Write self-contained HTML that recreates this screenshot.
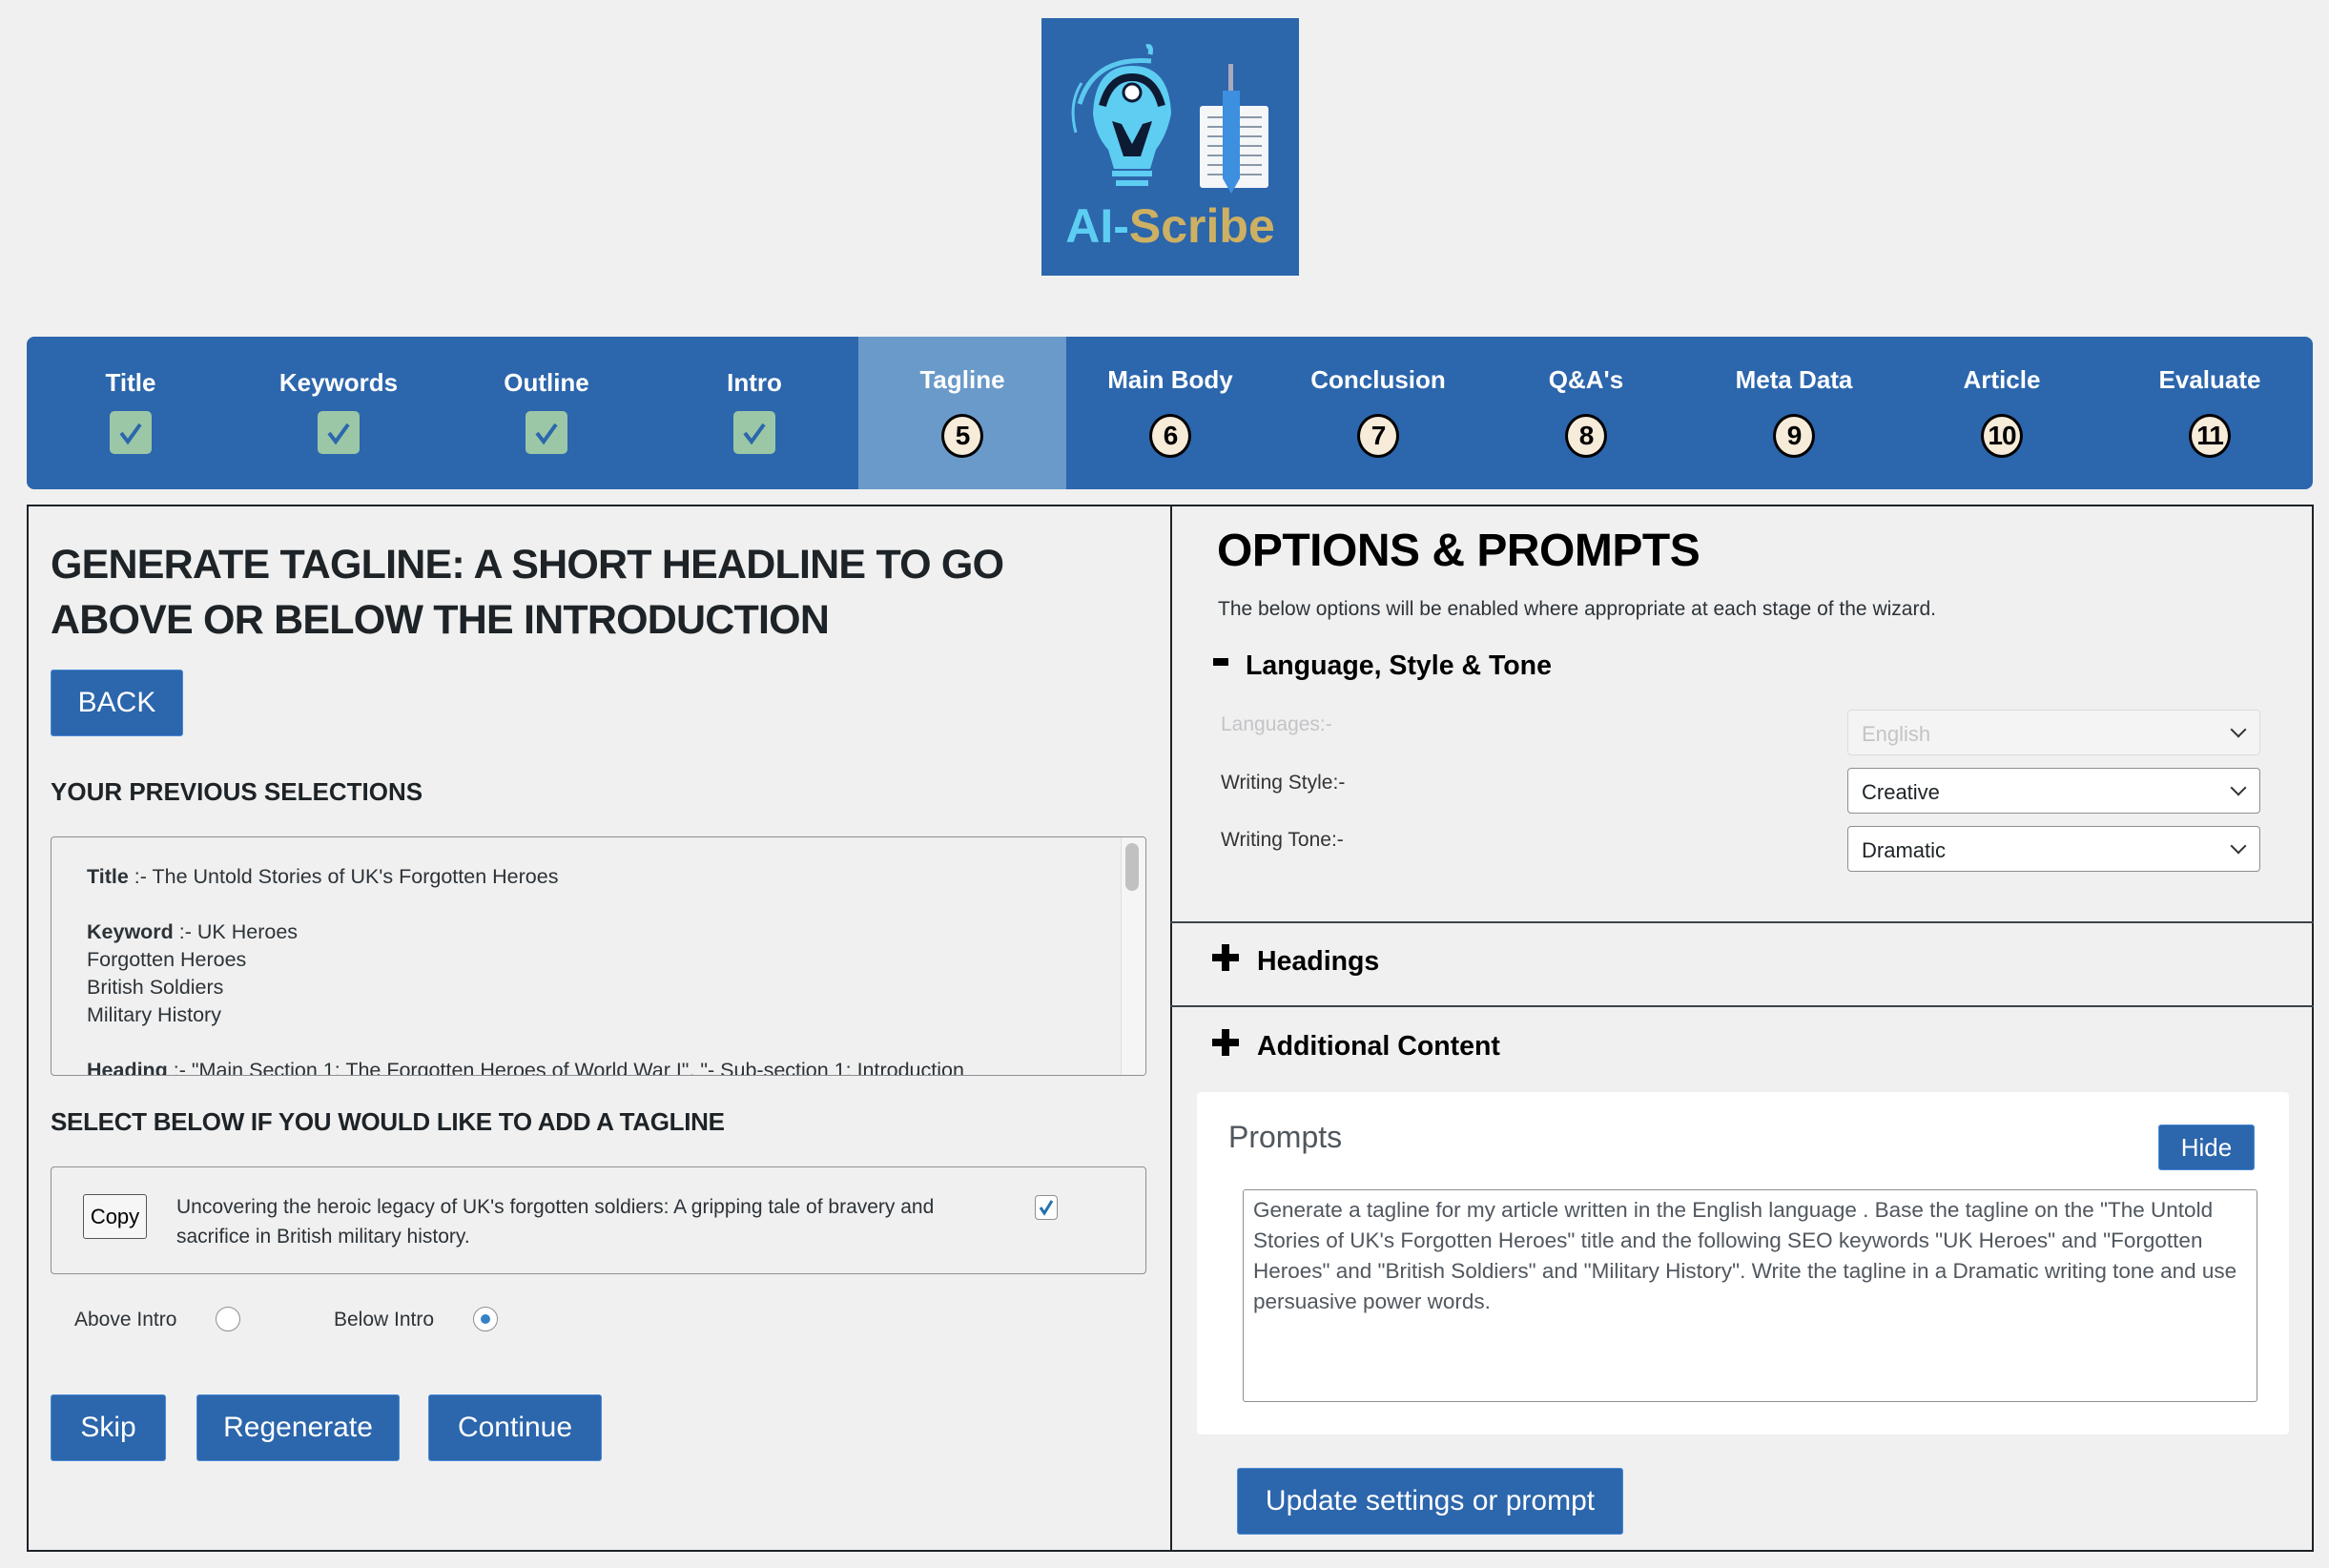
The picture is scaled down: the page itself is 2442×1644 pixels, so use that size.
<!DOCTYPE html>
<html><head><meta charset="utf-8"><style>
*{box-sizing:border-box;margin:0;padding:0}
body{width:2442px;height:1644px;background:#f0f0f0;font-family:"Liberation Sans",Arial,sans-serif;color:#1d2327;position:relative;overflow:hidden}
.a{position:absolute}
.nav{left:28px;top:353px;width:2397px;height:160px;background:#2c66ac;border-radius:8px;overflow:hidden}
.it{position:absolute;top:0;width:218px;height:160px;text-align:center;color:#fff;font-weight:bold;font-size:26px}
.it .l{position:absolute;left:0;right:0;top:30px}
.chk{position:absolute;left:87px;top:78px;width:44px;height:45px;background:#9bc7a7;border-radius:5px}
.cir{position:absolute;left:87px;top:81px;width:44px;height:46px;border-radius:50%;background:#f7ebd9;border:3px solid #000;color:#000;font-weight:bold;font-size:28px;line-height:40px;letter-spacing:-1px}
.panel{border:2px solid #1d2327}
.btn{position:absolute;background:#2c66ac;color:#fff;font-size:30px;text-align:center;border-radius:3px;border:1px solid #4a8ad6}
.sel{position:absolute;left:1937px;width:433px;height:48px;background:#fff;border:1px solid #8c8f94;border-radius:4px;font-size:22px;padding:12px 14px}
.sel:after{content:"";position:absolute;right:16px;top:14px;width:10px;height:10px;border-right:2px solid #333;border-bottom:2px solid #333;transform:rotate(45deg)}
.lbl{position:absolute;left:1280px;font-size:21px;color:#333}
</style></head><body>

<div class="a" style="left:1092px;top:19px;width:270px;height:270px;background:#2c66ab">
<svg width="270" height="270" viewBox="0 0 270 270">
<path d="M40 90 Q55 40 115 45" stroke="#5bc8ee" stroke-width="5" fill="none"/>
<path d="M36 120 Q28 90 42 68" stroke="#5bc8ee" stroke-width="3" fill="none"/>
<path d="M54 100 Q56 50 95 50 Q134 50 136 100 Q132 122 120 138 L114 158 L76 158 L70 138 Q56 122 54 100Z" fill="#5ecdf2"/>
<path d="M64 92 Q72 62 95 62 Q118 62 126 92" stroke="#0d1a33" stroke-width="8" fill="none"/>
<circle cx="95" cy="78" r="9" fill="#fff" stroke="#0d1a33" stroke-width="3"/>
<path d="M74 108 L86 145 L104 145 L116 108 L106 111 L95 132 L84 111Z" fill="#0d1a33"/>
<rect x="74" y="160" width="42" height="6" fill="#5ecdf2"/><rect x="78" y="170" width="34" height="6" fill="#5ecdf2"/>
<path d="M110 30 Q116 28 114 38" stroke="#5ecdf2" stroke-width="5" fill="none"/>
<rect x="166" y="92" width="72" height="86" rx="3" fill="#f4f6f8"/>
<g stroke="#8a98a8" stroke-width="2"><line x1="174" y1="104" x2="231" y2="104"/><line x1="174" y1="114" x2="231" y2="114"/><line x1="174" y1="124" x2="231" y2="124"/><line x1="174" y1="134" x2="231" y2="134"/><line x1="174" y1="144" x2="231" y2="144"/><line x1="174" y1="154" x2="231" y2="154"/><line x1="174" y1="164" x2="231" y2="164"/></g>
<rect x="190" y="76" width="18" height="92" fill="#3d8fe0"/><rect x="196" y="48" width="5" height="28" fill="#aab"/>
<path d="M190 168 L208 168 L199 184Z" fill="#3d8fe0"/>
<text x="135" y="235" text-anchor="middle" font-family="Liberation Sans" font-weight="bold" font-size="50"><tspan fill="#5ecdf2">AI-</tspan><tspan fill="#cdb062">Scribe</tspan></text>
</svg></div>

<div class="a nav">
 <div class="a" style="left:872px;top:0;width:218px;height:160px;background:#6a9ac9"></div>
 <div class="it" style="left:0"><div class="l" style="top:33px">Title</div><div class="chk"><svg width="44" height="45"><path d="M12 23 L19 32 L32 14" stroke="#2c66ac" stroke-width="4" fill="none"/></svg></div></div>
 <div class="it" style="left:218px"><div class="l" style="top:33px">Keywords</div><div class="chk"><svg width="44" height="45"><path d="M12 23 L19 32 L32 14" stroke="#2c66ac" stroke-width="4" fill="none"/></svg></div></div>
 <div class="it" style="left:436px"><div class="l" style="top:33px">Outline</div><div class="chk"><svg width="44" height="45"><path d="M12 23 L19 32 L32 14" stroke="#2c66ac" stroke-width="4" fill="none"/></svg></div></div>
 <div class="it" style="left:654px"><div class="l" style="top:33px">Intro</div><div class="chk"><svg width="44" height="45"><path d="M12 23 L19 32 L32 14" stroke="#2c66ac" stroke-width="4" fill="none"/></svg></div></div>
 <div class="it" style="left:872px"><div class="l">Tagline</div><div class="cir">5</div></div>
 <div class="it" style="left:1090px"><div class="l">Main Body</div><div class="cir">6</div></div>
 <div class="it" style="left:1308px"><div class="l">Conclusion</div><div class="cir">7</div></div>
 <div class="it" style="left:1526px"><div class="l">Q&amp;A's</div><div class="cir">8</div></div>
 <div class="it" style="left:1744px"><div class="l">Meta Data</div><div class="cir">9</div></div>
 <div class="it" style="left:1962px"><div class="l">Article</div><div class="cir">10</div></div>
 <div class="it" style="left:2180px"><div class="l">Evaluate</div><div class="cir">11</div></div>
</div>

<div class="a panel" style="left:28px;top:529px;width:1201px;height:1098px"></div>
<div class="a panel" style="left:1227px;top:529px;width:1199px;height:1098px"></div>

<div class="a" style="left:53px;top:563px;font-size:43px;font-weight:bold;line-height:58px;letter-spacing:-0.8px;width:1150px">GENERATE TAGLINE: A SHORT HEADLINE TO GO ABOVE OR BELOW THE INTRODUCTION</div>
<div class="btn" style="left:53px;top:702px;width:139px;height:70px;line-height:68px">BACK</div>
<div class="a" style="left:53px;top:815px;font-size:26px;font-weight:bold">YOUR PREVIOUS SELECTIONS</div>
<div class="a" style="left:53px;top:877px;width:1149px;height:251px;border:1px solid #8c8f94;border-radius:4px;overflow:hidden;font-size:21.5px;color:#2c3338;line-height:29px;padding:27px 0 0 37px">
<div><b>Title</b> :- The Untold Stories of UK's Forgotten Heroes</div><br>
<div><b>Keyword</b> :- UK Heroes<br>Forgotten Heroes<br>British Soldiers<br>Military History</div><br>
<div><b>Heading</b> :- "Main Section 1: The Forgotten Heroes of World War I", "- Sub-section 1: Introduction</div>
<div class="a" style="right:0;top:0;width:26px;height:251px;background:#f5f5f5;border-left:1px solid #e0e0e0"></div>
<div class="a" style="right:7px;top:6px;width:14px;height:50px;background:#c1c1c1;border-radius:7px"></div>
</div>
<div class="a" style="left:53px;top:1161px;font-size:26px;font-weight:bold;letter-spacing:-0.3px">SELECT BELOW IF YOU WOULD LIKE TO ADD A TAGLINE</div>
<div class="a" style="left:53px;top:1223px;width:1149px;height:113px;border:1px solid #8c8f94;border-radius:4px"></div>
<div class="a" style="left:87px;top:1252px;width:67px;height:47px;border:1px solid #555;border-radius:3px;background:#f6f6f6;font-size:22px;line-height:45px;text-align:center;color:#000">Copy</div>
<div class="a" style="left:185px;top:1250px;width:855px;font-size:21px;line-height:31px;color:#2c3338">Uncovering the heroic legacy of UK's forgotten soldiers: A gripping tale of bravery and sacrifice in British military history.</div>
<div class="a" style="left:1085px;top:1253px;width:24px;height:26px;border:1px solid #8c8f94;border-radius:4px;background:#fff"><svg width="22" height="24"><path d="M5 12 L9 18 L17 5" stroke="#2271b1" stroke-width="3" fill="none"/></svg></div>
<div class="a" style="left:78px;top:1372px;font-size:21px;color:#2c3338">Above Intro</div>
<div class="a" style="left:226px;top:1370px;width:26px;height:26px;border-radius:50%;border:1px solid #8c8f94;background:#fff"></div>
<div class="a" style="left:350px;top:1372px;font-size:21px;color:#2c3338">Below Intro</div>
<div class="a" style="left:496px;top:1370px;width:26px;height:26px;border-radius:50%;border:1px solid #8c8f94;background:#fff"><div class="a" style="left:7px;top:7px;width:10px;height:10px;border-radius:50%;background:#3582c4"></div></div>
<div class="btn" style="left:53px;top:1462px;width:121px;height:70px;line-height:68px">Skip</div>
<div class="btn" style="left:206px;top:1462px;width:213px;height:70px;line-height:68px">Regenerate</div>
<div class="btn" style="left:449px;top:1462px;width:182px;height:70px;line-height:68px">Continue</div>

<div class="a" style="left:1276px;top:550px;font-size:48px;font-weight:bold;color:#000;letter-spacing:-0.5px">OPTIONS &amp; PROMPTS</div>
<div class="a" style="left:1277px;top:627px;font-size:21px;color:#2c3338">The below options will be enabled where appropriate at each stage of the wizard.</div>
<div class="a" style="left:1272px;top:690px;width:16px;height:8px;background:#000"></div>
<div class="a" style="left:1306px;top:682px;font-size:28.5px;font-weight:bold;color:#000">Language, Style &amp; Tone</div>
<div class="lbl" style="top:748px;color:#c3c4c7">Languages:-</div>
<div class="sel" style="top:744px;background:#f4f4f4;border-color:#dcdcde;color:#c3c4c7">English</div>
<div class="lbl" style="top:809px">Writing Style:-</div>
<div class="sel" style="top:805px">Creative</div>
<div class="lbl" style="top:869px">Writing Tone:-</div>
<div class="sel" style="top:866px">Dramatic</div>
<div class="a" style="left:1227px;top:966px;width:1199px;height:2px;background:#3c434a"></div>
<div class="a" style="left:1227px;top:1054px;width:1199px;height:2px;background:#3c434a"></div>
<div class="a" style="left:1271px;top:990px;width:28px;height:28px"><div class="a" style="left:0;top:10px;width:28px;height:8px;background:#000"></div><div class="a" style="left:10px;top:0;width:8px;height:28px;background:#000"></div></div>
<div class="a" style="left:1318px;top:992px;font-size:28.5px;font-weight:bold;color:#000">Headings</div>
<div class="a" style="left:1271px;top:1079px;width:28px;height:28px"><div class="a" style="left:0;top:10px;width:28px;height:8px;background:#000"></div><div class="a" style="left:10px;top:0;width:8px;height:28px;background:#000"></div></div>
<div class="a" style="left:1318px;top:1081px;font-size:28.5px;font-weight:bold;color:#000">Additional Content</div>
<div class="a" style="left:1255px;top:1145px;width:1145px;height:359px;background:#fff;border-radius:4px"></div>
<div class="a" style="left:1288px;top:1174px;font-size:32px;color:#50575e">Prompts</div>
<div class="btn" style="left:2263px;top:1179px;width:101px;height:48px;line-height:46px;font-size:26px">Hide</div>
<div class="a" style="left:1303px;top:1247px;width:1064px;height:223px;border:1px solid #8c8f94;border-radius:3px;font-size:22.5px;line-height:32px;color:#50575e;padding:5px 10px">Generate a tagline for my article written in the English language . Base the tagline on the "The Untold Stories of UK's Forgotten Heroes" title and the following SEO keywords "UK Heroes" and "Forgotten Heroes" and "British Soldiers" and "Military History". Write the tagline in a Dramatic writing tone and use persuasive power words.</div>
<div class="btn" style="left:1297px;top:1539px;width:405px;height:70px;line-height:68px">Update settings or prompt</div>
</body></html>
